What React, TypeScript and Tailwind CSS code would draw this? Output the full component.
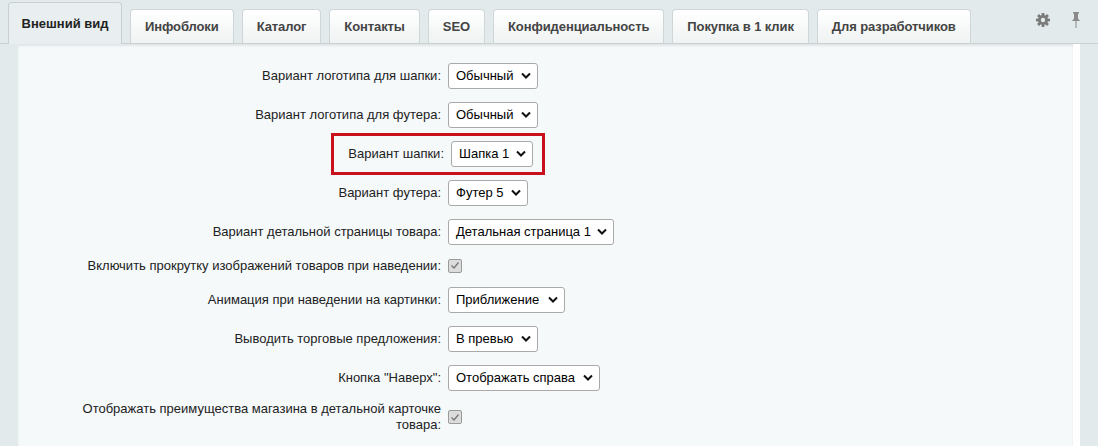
import React from "react";

const Sel = ({ v, w }: { v: string; w: number }) => (
  <div className="flex items-center justify-between h-[26px] border border-[#a9a9a9] rounded-[3px] bg-white pl-[7px] pr-[6px] text-[13px] text-black" style={{ width: w }}>
    <span>{v}</span>
    <svg width="10" height="7" viewBox="0 0 10 7"><path d="M1 1.5l4 4 4-4" stroke="#111" strokeWidth="2" fill="none" /></svg>
  </div>
);
const Chk = () => (
  <div className="w-[14px] h-[14px] border border-[#9a9a9a] rounded-[2px] bg-[#dcdcdc] flex items-center justify-center">
    <svg width="10" height="9" viewBox="0 0 10 9"><path d="M1.5 4.5l2.5 2.5 4.5-5.5" stroke="#777" strokeWidth="1.3" fill="none" /></svg>
  </div>
);

const rows: [string, React.ReactNode, number, boolean?][] = [
  ["Вариант логотипа для шапки:", <Sel v="Обычный" w={90} />, 39],
  ["Вариант логотипа для футера:", <Sel v="Обычный" w={90} />, 39],
  ["Вариант шапки:", <Sel v="Шапка 1" w={82} />, 39, true],
  ["Вариант футера:", <Sel v="Футер 5" w={80} />, 39],
  ["Вариант детальной страницы товара:", <Sel v="Детальная страница 1" w={166} />, 39],
  ["Включить прокрутку изображений товаров при наведении:", <Chk />, 29],
  ["Анимация при наведении на картинки:", <Sel v="Приближение" w={117} />, 39],
  ["Выводить торговые предложения:", <Sel v="В превью" w={90} />, 39],
  ["Кнопка \"Наверх\":", <Sel v="Отображать справа" w={152} />, 39],
];

const tabs = ["Инфоблоки", "Каталог", "Контакты", "SEO", "Конфиденциальность", "Покупка в 1 клик", "Для разработчиков"];

export default function App() {
  return (
    <div className="w-[1098px] h-[446px] overflow-hidden bg-[#e3eaec] text-[#000]" style={{ fontFamily: '"Liberation Sans", Arial, sans-serif' }}>
      <div className="flex items-end h-[44px] pl-[8px] border-b border-[#c8d0d2] relative">
        <div className="h-[42px] w-[114px] bg-[#e9eff0] border border-[#c8d0d2] border-b-0 rounded-t-[4px] flex items-center justify-center text-[13px] font-bold text-[#222] -mb-px">Внешний вид</div>
        {tabs.map((t) => (
          <div key={t} className="ml-[8px] h-[34px] px-[14px] bg-gradient-to-b from-white to-[#f0f3f3] border border-[#cfd6d8] border-b-0 rounded-t-[4px] flex items-center text-[13px] font-bold text-[#444] tracking-[-0.1px]">{t}</div>
        ))}
        <div className="absolute right-[48px] top-[13px]">
          <svg width="14" height="14" viewBox="0 0 14 14"><g fill="#7a7a7a"><circle cx="7" cy="7" r="5" /><rect x="5.6" y="0" width="2.8" height="14" /><rect x="0" y="5.6" width="14" height="2.8" /><rect x="5.6" y="0" width="2.8" height="14" transform="rotate(45 7 7)" /><rect x="5.6" y="0" width="2.8" height="14" transform="rotate(-45 7 7)" /></g><circle cx="7" cy="7" r="2.2" fill="#e3eaec" /></svg>
        </div>
        <div className="absolute right-[17px] top-[12px]">
          <svg width="10" height="16" viewBox="0 0 10 16"><path d="M2 0h6v1.5H7v5l2 2.5H1l2-2.5v-5H2z M4.5 9h1v7h-1z" fill="#8a8a8a" /></svg>
        </div>
      </div>
      <div className="ml-[18px] mr-[18px] h-[402px] bg-[#f5f9fa] border-r-[7px] border-white shadow-[inset_0_2px_2px_rgba(0,0,0,0.08)] pt-[12px] text-[13px] text-[#222]">
        {rows.map(([l, c, h, hl], i) => (
          <div key={i} className="flex items-center" style={{ height: h }}>
            <div className={hl ? "flex items-center ml-[313px] h-[42px] border-[3px] border-[#c8111c] pr-[9px]" : "flex items-center"}>
              <div className={hl ? "w-[117px] text-right pr-[7px]" : "w-[430px] text-right pr-[7px]"}>{l}</div>
              {c}
            </div>
          </div>
        ))}
        <div className="flex items-center mt-[4px]">
          <div className="w-[430px] text-right pr-[7px] leading-[16px]">Отображать преимущества магазина в детальной карточке<br />товара:</div>
          <Chk />
        </div>
      </div>
    </div>
  );
}
